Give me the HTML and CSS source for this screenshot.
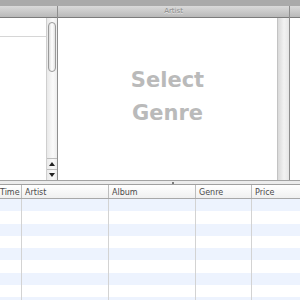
FILE: index.html
```html
<!DOCTYPE html>
<html lang="en">
<head>
    <meta charset="UTF-8">
    <title>Music Browser</title>
    <link rel="stylesheet" href="styles.css">
</head>
<body>

<div class="window">
    <div class="toolbar-edge"></div>

    <!-- Column browser -->
    <div class="browser">
        <div class="pane pane-genre">
            <div class="col-head"></div>
            <div class="pane-body">
                <div class="list">
                    <div class="list-row"></div>
                </div>
                <div class="scrollbar">
                    <div class="track"><div class="thumb"></div></div>
                    <div class="arrow up"></div>
                    <div class="arrow down"></div>
                </div>
            </div>
        </div>
        <div class="pane pane-artist">
            <div class="col-head">Artist</div>
            <div class="pane-body">
                <div class="placeholder">Select<br>Genre</div>
                <div class="scrollbar empty"></div>
            </div>
        </div>
        <div class="pane pane-album">
            <div class="col-head"></div>
            <div class="pane-body"></div>
        </div>
    </div>

    <div class="splitter"><span class="grip"></span></div>

    <!-- Track list -->
    <div class="tracks">
        <div class="row head">
            <div class="cell c-time">Time</div>
            <div class="cell c-artist">Artist</div>
            <div class="cell c-album">Album</div>
            <div class="cell c-genre">Genre</div>
            <div class="cell c-price">Price</div>
        </div>
        <div class="row"><div class="cell c-time"></div><div class="cell c-artist"></div><div class="cell c-album"></div><div class="cell c-genre"></div><div class="cell c-price"></div></div>
        <div class="row"><div class="cell c-time"></div><div class="cell c-artist"></div><div class="cell c-album"></div><div class="cell c-genre"></div><div class="cell c-price"></div></div>
        <div class="row"><div class="cell c-time"></div><div class="cell c-artist"></div><div class="cell c-album"></div><div class="cell c-genre"></div><div class="cell c-price"></div></div>
        <div class="row"><div class="cell c-time"></div><div class="cell c-artist"></div><div class="cell c-album"></div><div class="cell c-genre"></div><div class="cell c-price"></div></div>
        <div class="row"><div class="cell c-time"></div><div class="cell c-artist"></div><div class="cell c-album"></div><div class="cell c-genre"></div><div class="cell c-price"></div></div>
        <div class="row"><div class="cell c-time"></div><div class="cell c-artist"></div><div class="cell c-album"></div><div class="cell c-genre"></div><div class="cell c-price"></div></div>
        <div class="row"><div class="cell c-time"></div><div class="cell c-artist"></div><div class="cell c-album"></div><div class="cell c-genre"></div><div class="cell c-price"></div></div>
        <div class="row"><div class="cell c-time"></div><div class="cell c-artist"></div><div class="cell c-album"></div><div class="cell c-genre"></div><div class="cell c-price"></div></div>
        <div class="row"><div class="cell c-time"></div><div class="cell c-artist"></div><div class="cell c-album"></div><div class="cell c-genre"></div><div class="cell c-price"></div></div>
    </div>
</div>

</body>
</html>
```

FILE: styles.css
```css
body {
    margin: 0;
    font-family: "DejaVu Sans", sans-serif;
    background: #fff;
    overflow: hidden;
}
.window {
    width: 300px;
    height: 300px;
    display: flex;
    flex-direction: column;
    overflow: hidden;
}
.toolbar-edge {
    height: 6px;
    flex-shrink: 0;
    background: #aaaaaa;
}

/* Column browser */
.browser {
    display: flex;
    height: 174px;
    flex-shrink: 0;
}
.pane {
    display: flex;
    flex-direction: column;
    border-right: 1px solid #8e8e8e;
}
.pane-genre {
    width: 57px;
}
.pane-artist {
    width: 231px;
}
.pane-album {
    flex: 1;
    border-right: none;
}
.col-head {
    height: 11px;
    line-height: 11px;
    border-bottom: 1px solid #7c7c7c;
    background: linear-gradient(#dadada, #b9b9b9);
    font-size: 7px;
    color: #8a8a8a;
    text-shadow: 0 1px 0 #e4e4e4;
    text-align: center;
}
.pane-body {
    flex: 1;
    display: flex;
    min-height: 0;
}
.list {
    flex: 1;
}
.list-row {
    height: 18px;
    border-bottom: 1px solid #d6d6d6;
}
.scrollbar {
    width: 10px;
    display: flex;
    flex-direction: column;
    border-left: 1px solid #cfcfcf;
    background: linear-gradient(90deg, #e9e9e9, #fafafa 60%, #ececec);
}
.scrollbar.empty {
    width: 11px;
    border-left: 1px solid #c3c3c3;
    background: linear-gradient(90deg, #d9d9d9, #f3f3f3 55%, #e6e6e6);
}
.track {
    flex: 1;
    padding: 4px 1px 0;
}
.thumb {
    height: 48px;
    border: 1px solid #9a9a9a;
    border-radius: 5px;
    background: linear-gradient(90deg, #dcdcdc, #ffffff 50%, #e2e2e2);
}
.arrow {
    height: 10px;
    border-top: 1px solid #bdbdbd;
    display: flex;
    align-items: center;
    justify-content: center;
}
.arrow::after {
    content: "";
    border-left: 3px solid transparent;
    border-right: 3px solid transparent;
}
.arrow.up::after {
    border-bottom: 4px solid #222;
}
.arrow.down::after {
    border-top: 4px solid #222;
}
.placeholder {
    flex: 1;
    display: flex;
    align-items: center;
    justify-content: center;
    text-align: center;
    padding-bottom: 4px;
    font-size: 21px;
    font-weight: bold;
    line-height: 33px;
    color: #bababa;
}

/* Split bar */
.splitter {
    height: 3px;
    flex-shrink: 0;
    border-top: 1px solid #a3a3a3;
    background: #ececec;
    display: flex;
    justify-content: center;
}
.grip {
    width: 2px;
    height: 2px;
    margin-top: 1px;
    margin-left: 46px;
    background: #7a7a7a;
}

/* Track list */
.tracks {
    flex: 1;
    min-height: 0;
    overflow: hidden;
}
.row {
    display: flex;
    height: 12.3px;
}
.row:nth-child(even) {
    background: #edf3fe;
}
.row.head {
    height: 13px;
    border-top: 1px solid #a0a0a0;
    border-bottom: 1px solid #a8a8a8;
    background: linear-gradient(#ffffff, #f0f0f0);
    font-size: 8px;
    line-height: 15px;
    color: #4a4a4a;
}
.cell {
    border-right: 1px solid #d3d3d3;
    padding-left: 3px;
    box-sizing: border-box;
    white-space: nowrap;
    overflow: hidden;
}
.head .cell {
    border-right-color: #bdbdbd;
}
.c-time {
    width: 22px;
    padding-left: 0;
}
.c-artist {
    width: 87px;
}
.c-album {
    width: 87px;
}
.c-genre {
    width: 56px;
}
.c-price {
    flex: 1;
    border-right: none;
}
```
